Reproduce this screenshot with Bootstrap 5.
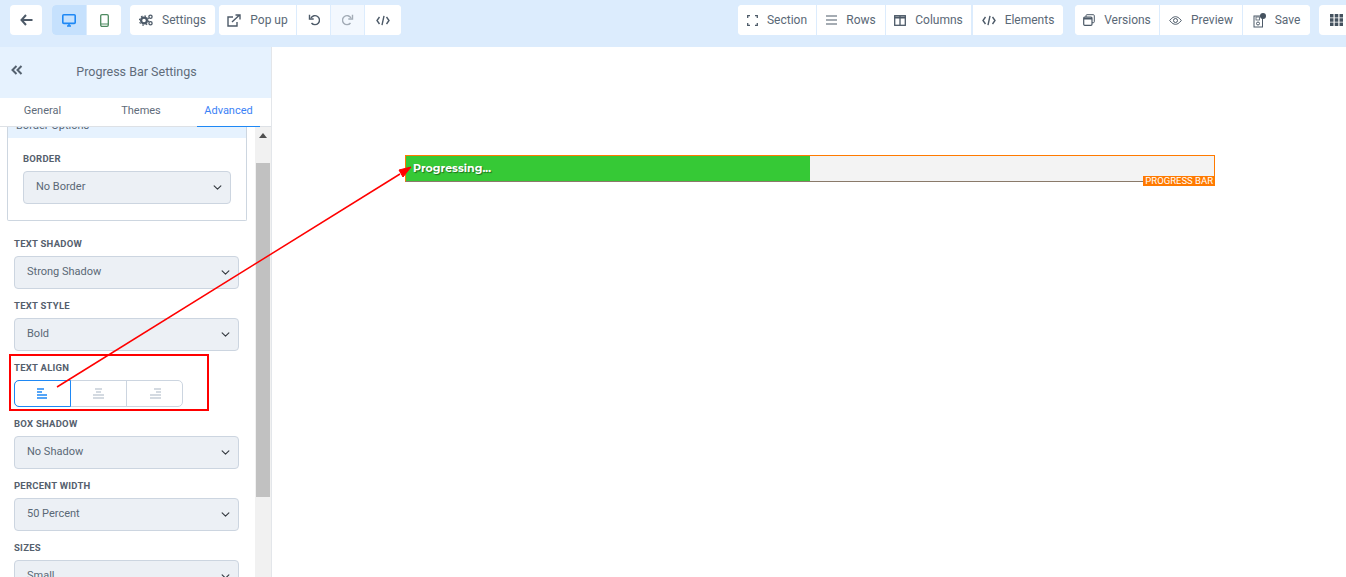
<!DOCTYPE html>
<html lang="en"><head><meta charset="utf-8"><title>Progress Bar Settings</title>
<link href="https://cdn.jsdelivr.net/npm/bootstrap@5.3.0/dist/css/bootstrap.min.css" rel="stylesheet">
<style>
html,body{height:577px;overflow:hidden;background:#fff;font-family:Roboto,"Liberation Sans",sans-serif;color:#5a6876}
.topbar{height:47px;background:#dcecfd;padding:5px 0 0 10px;width:1400px}
.tb-group{height:30px;background:#fff;border-radius:4px;overflow:hidden;flex:none}
.tb-item{height:30px;display:flex;align-items:center;justify-content:center;gap:9px;font-size:12px;color:#5a6876;flex:none;border-right:1px solid #dcecfd;background:#fff}
.tb-item:last-child{border-right:0}
.tb-item svg{flex:none}
.tb-on{background:#c6e1fd}
.tb-dim{background:#f3f8fe}
.sidepanel{width:272px;height:530px;border-right:1px solid #e3e6ea;flex:none;overflow:hidden}
.panel-head{height:51px;background:#e6f2fe;font-size:12.5px;color:#5f6c7a;padding-right:0}
.panel-back{position:absolute;left:11px;top:18px}
.tab-row{height:29px;border-bottom:1px solid #dde1e6;font-size:11px}
.tab-cell{height:29px;line-height:26px;text-align:center;color:#5f6c7a}
.tab-a{width:85px}.tab-b{width:112px}.tab-c{width:63px;margin-left:0;color:#3b82f6;border-bottom:1px solid #1e88f5;height:29px}
.scroller{height:450px;overflow:hidden;flex:none}
.scroll-col{width:255px;flex:none;overflow:hidden}
.scroll-inner{margin-top:-6px;padding:0 0 0 7px}
.optcard{width:240px;height:100px;border:1px solid #cdd6e0;border-top:0;border-radius:0 0 2px 2px;margin-bottom:13px}
.optcard-h{height:17px;background:#e6f2fe;font-size:11px;line-height:10px;padding-left:8px;color:#5a6876}
.optcard-b{padding:11px 15px 0 15px}
.fld{margin-left:7px;width:225px;margin-bottom:7px}
.optcard-b .fld{margin-left:0;width:208px}
.fld-label{display:block;font-size:9.5px;font-weight:700;height:22px;line-height:15px;padding-top:2px;letter-spacing:.25px;color:#55606d;margin:0}
.fld-select.form-select{height:33px;font-size:11px;padding:0 12px;background-color:#ecf0f5;border:1px solid #ccd5e0;border-radius:4px;color:#5a6876;background-size:11px 9px;background-position:right 7px center;font-family:Roboto,sans-serif}
.align-row{height:27px;width:169px;border:1px solid #ccd5e0;border-radius:5px}
.align-cell{height:100%;width:56px;display:flex;align-items:center;justify-content:center;border-right:1px solid #ccd5e0;flex:none}
.align-cell:last-child{border-right:0}
.align-on{border:1px solid #1e88f5;border-radius:5px 0 0 5px;margin:-1px 0 -1px -1px;height:27px;width:57px}
.sbar{width:16px;background:#f1f1f1;margin-right:1px;flex:none;position:relative}
.sbar-up{width:0;height:0;border:4px solid transparent;border-bottom:5px solid #505050;border-top:0;position:absolute;left:4px;top:6px}
.sbar-thumb{background:#c1c1c1;height:334px;margin:36px 1px 0 1px}
.canvas-pane{flex:1 1 auto;padding:108px 0 0 133px;background:#fff}
.pbar{width:810px;height:27px;background:#f3f3f3;border:1px solid #ff7a00;border-bottom-color:#8a7a6a;position:relative}
.pbar-fill{width:50%;height:100%;background:#36c936;color:#fff;font-family:Montserrat,Inter,"Open Sans",sans-serif;font-weight:700;font-size:11px;padding-left:7px;line-height:25px;text-shadow:1px 1px 1px rgba(0,0,0,.45)}
.pbar-tag{position:absolute;right:-1px;bottom:-5px;height:10px;background:#ff7a00;color:#fff;font-size:9.5px;line-height:10px;padding:0 2px;white-space:nowrap}
.overlay-box{position:absolute;left:9px;top:354px;width:200px;height:57px;border:2px solid #f00;pointer-events:none}
.overlay-arrow{position:absolute;left:0;top:0;width:1346px;height:577px;pointer-events:none}
</style></head>
<body>
<div class="topbar d-flex">
  <div class="tb-group d-flex" style="margin-right:10px"><div class="tb-item" style="width:32px"><svg width="13" height="12" viewBox="0 0 13 12"><path d="M6 1 1.5 6 6 11M2 6h10.5" fill="none" stroke="#4d5a68" stroke-width="2"/></svg></div></div>
  <div class="tb-group d-flex" style="margin-right:9px">
    <div class="tb-item tb-on" style="width:35px"><svg width="14" height="13" viewBox="0 0 14 13"><rect x=".8" y=".8" width="12.4" height="8.6" rx="1" fill="none" stroke="#1e88f5" stroke-width="1.6"/><path d="M5 12h4M7 9v3" stroke="#1e88f5" stroke-width="1.6"/></svg></div>
    <div class="tb-item" style="width:34px"><svg width="9" height="13" viewBox="0 0 9 13"><rect x=".7" y=".7" width="7.6" height="11.6" rx="1.3" fill="none" stroke="#4d8a60" stroke-width="1.3"/><path d="M1 10h7" stroke="#4d8a60"/></svg></div>
  </div>
  <div class="tb-group d-flex" style="margin-right:4px">
    <div class="tb-item" style="width:85px"><svg width="14" height="12" viewBox="0 0 14 12"><circle cx="5" cy="6.5" r="2.9" fill="none" stroke="#4d5a68" stroke-width="2.2"/><circle cx="5" cy="6.5" r="4.6" fill="none" stroke="#4d5a68" stroke-width="1.3" stroke-dasharray="1.6 2"/><circle cx="11.5" cy="2.7" r="1.6" fill="none" stroke="#4d5a68" stroke-width="1.3"/><circle cx="11.5" cy="9.3" r="1.6" fill="none" stroke="#4d5a68" stroke-width="1.3"/></svg><span>Settings</span></div>
  </div>
  <div class="tb-group d-flex">
    <div class="tb-item" style="width:78px"><svg width="14" height="13" viewBox="0 0 14 13"><path d="M10 8v4H1V3h5" fill="none" stroke="#4d5a68" stroke-width="1.4"/><path d="M5 8 12 1.5M8.5 1h4.5v4.5" fill="none" stroke="#4d5a68" stroke-width="1.4"/></svg><span>Pop up</span></div>
    <div class="tb-item" style="width:34px"><svg width="12" height="12" viewBox="0 0 12 12"><path d="M3 4a4.5 4.5 0 1 1 .5 5" fill="none" stroke="#4d5a68" stroke-width="1.4"/><path d="M1.500 .8V5H5.700" fill="none" stroke="#4d5a68" stroke-width="1.400"/></svg></div>
    <div class="tb-item tb-dim" style="width:34px"><svg width="12" height="12" viewBox="0 0 12 12"><path d="M9 4a4.500 4.500 0 1 0-.5 5" fill="none" stroke="#a3acb6" stroke-width="1.400"/><path d="M10.500 .8V5H6.300" fill="none" stroke="#a3acb6" stroke-width="1.400"/></svg></div>
    <div class="tb-item" style="width:36px"><svg width="14" height="11" viewBox="0 0 14 11"><path d="M3.500 2 1 5.500 3.500 9M10.500 2 13 5.500 10.500 9M8 .8 6 10.200" fill="none" stroke="#4d5a68" stroke-width="1.400"/></svg></div>
  </div>
  <div class="tb-group d-flex" style="margin-left:337px;margin-right:12px">
    <div class="tb-item" style="width:79px"><svg width="11" height="11" viewBox="0 0 11 11"><path d="M.7 3V.7H3M8 .7h2.300V3M10.300 8v2.300H8M3 10.300H.7V8" fill="none" stroke="#4d5a68" stroke-width="1.300"/></svg><span>Section</span></div>
    <div class="tb-item" style="width:69px"><svg width="11" height="10" viewBox="0 0 11 10"><path d="M0 1h11M0 5h11M0 9h11" stroke="#4d5a68" stroke-width="1.200"/></svg><span>Rows</span></div>
    <div class="tb-item" style="width:87px;border-right-width:2px"><svg width="12" height="11" viewBox="0 0 12 11"><rect x=".7" y=".7" width="10.600" height="9.600" fill="none" stroke="#4d5a68" stroke-width="1.300"/><path d="M0 2.500h12" stroke="#4d5a68" stroke-width="2"/><path d="M6 1v9" stroke="#4d5a68" stroke-width="1.300"/></svg><span>Columns</span></div>
    <div class="tb-item" style="width:90px"><svg width="14" height="11" viewBox="0 0 14 11"><path d="M3.500 2 1 5.500 3.500 9M10.500 2 13 5.500 10.500 9M8 .8 6 10.200" fill="none" stroke="#4d5a68" stroke-width="1.400"/></svg><span>Elements</span></div>
  </div>
  <div class="tb-group d-flex" style="margin-right:9px">
    <div class="tb-item" style="width:85px"><svg width="12" height="12" viewBox="0 0 12 12"><rect x="3" y=".7" width="8.300" height="8" rx="1" fill="none" stroke="#4d5a68"/><rect x=".7" y="3" width="8.300" height="8.300" rx="1" fill="#fff" stroke="#4d5a68" stroke-width="1.200"/><path d="M1 4.500h8" stroke="#4d5a68" stroke-width="2"/></svg><span>Versions</span></div>
    <div class="tb-item" style="width:83px"><svg width="13" height="9" viewBox="0 0 13 9"><path d="M.7 4.500C3 1.400 5 .7 6.500 .7S10 1.400 12.300 4.500C10 7.600 8 8.300 6.500 8.300S3 7.600 .7 4.500Z" fill="none" stroke="#4d5a68"/><circle cx="6.500" cy="4.500" r="2" fill="none" stroke="#4d5a68"/></svg><span>Preview</span></div>
    <div class="tb-item" style="width:67px"><svg width="13" height="15" viewBox="0 0 13 15"><rect x="1" y="3" width="8.500" height="11" fill="none" stroke="#4d5a68"/><rect x="3" y="4" width="3.500" height="3" fill="none" stroke="#4d5a68" stroke-width=".8"/><circle cx="5" cy="10.500" r="1.500" fill="none" stroke="#4d5a68"/><circle cx="10" cy="3" r="3" fill="#45525f"/></svg><span>Save</span></div>
  </div>
  <div class="tb-group d-flex">
    <div class="tb-item justify-content-start" style="width:60px;padding-left:11px"><svg width="13" height="12" viewBox="0 0 13 12"><path d="M0 0h3.500v3.500H0zM4.700 0h3.600v3.500H4.700zM9.500 0H13v3.500H9.500zM0 4.300h3.500v3.400H0zM4.700 4.300h3.600v3.400H4.700zM9.500 4.300H13v3.400H9.500zM0 8.500h3.500V12H0zM4.700 8.500h3.600V12H4.700zM9.500 8.500H13V12H9.500z" fill="#45525f"/></svg></div>
  </div>
</div>
<div class="d-flex">
  <aside class="sidepanel d-flex flex-column">
    <div class="panel-head position-relative d-flex align-items-center justify-content-center" >
      <svg class="panel-back" width="12" height="10" viewBox="0 0 12 10"><path d="M5.500 1 1.500 5 5.500 9M10.500 1 6.500 5 10.500 9" fill="none" stroke="#54616f" stroke-width="2"/></svg>
      <span style="transform:translateX(1px)">Progress Bar Settings</span>
    </div>
    <div class="tab-row d-flex flex-none">
      <div class="tab-cell tab-a">General</div>
      <div class="tab-cell tab-b">Themes</div>
      <div class="tab-cell tab-c">Advanced</div>
    </div>
    <div class="scroller d-flex">
      <div class="scroll-col">
        <div class="scroll-inner">
          <div class="optcard">
            <div class="optcard-h">Border Options</div>
            <div class="optcard-b">
              <div class="fld"><label class="fld-label">BORDER</label><select class="form-select fld-select"><option>No Border</option></select></div>
            </div>
          </div>
          <div style="margin-left:-7px">
          <div class="fld" style="margin-left:14px"><label class="fld-label">TEXT SHADOW</label><select class="form-select fld-select"><option>Strong Shadow</option></select></div>
          <div class="fld" style="margin-left:14px"><label class="fld-label">TEXT STYLE</label><select class="form-select fld-select"><option>Bold</option></select></div>
          <div class="fld" style="margin-left:14px;margin-bottom:7px"><label class="fld-label">TEXT ALIGN</label>
            <div class="align-row d-flex">
              <div class="align-cell align-on"><svg width="11" height="11" viewBox="0 0 11 11"><path d="M0 1h7M0 4h5M0 7h10M0 10h10" stroke="#1e88f5" stroke-width="1.300"/></svg></div>
              <div class="align-cell"><svg width="11" height="11" viewBox="0 0 11 11"><path d="M2 1h7M3 4h5M0 7h11M0 10h11" stroke="#c6ced8" stroke-width="1.300"/></svg></div>
              <div class="align-cell"><svg width="11" height="11" viewBox="0 0 11 11"><path d="M4 1h7M6 4h5M0 7h11M0 10h11" stroke="#c6ced8" stroke-width="1.300"/></svg></div>
            </div>
          </div>
          <div class="fld" style="margin-left:14px"><label class="fld-label">BOX SHADOW</label><select class="form-select fld-select"><option>No Shadow</option></select></div>
          <div class="fld" style="margin-left:14px"><label class="fld-label">PERCENT WIDTH</label><select class="form-select fld-select"><option>50 Percent</option></select></div>
          <div class="fld" style="margin-left:14px"><label class="fld-label">SIZES</label><select class="form-select fld-select"><option>Small</option></select></div>
          </div>
        </div>
      </div>
      <div class="sbar"><div class="sbar-up"></div><div class="sbar-thumb"></div></div>
    </div>
  </aside>
  <main class="canvas-pane">
    <div class="pbar"><div class="pbar-fill">Progressing...</div><div class="pbar-tag">PROGRESS BAR</div></div>
  </main>
</div>
<div class="overlay-box"></div>
<svg class="overlay-arrow" viewBox="0 0 1346 577"><path d="M57 387 400 174" stroke="#f00" stroke-width="1.500" fill="none"/><path d="M411 167 399 170 403 177Z" fill="#f00" stroke="#f00"/></svg>
<script src="https://cdn.jsdelivr.net/npm/bootstrap@5.3.0/dist/js/bootstrap.bundle.min.js"></script>
</body></html>
